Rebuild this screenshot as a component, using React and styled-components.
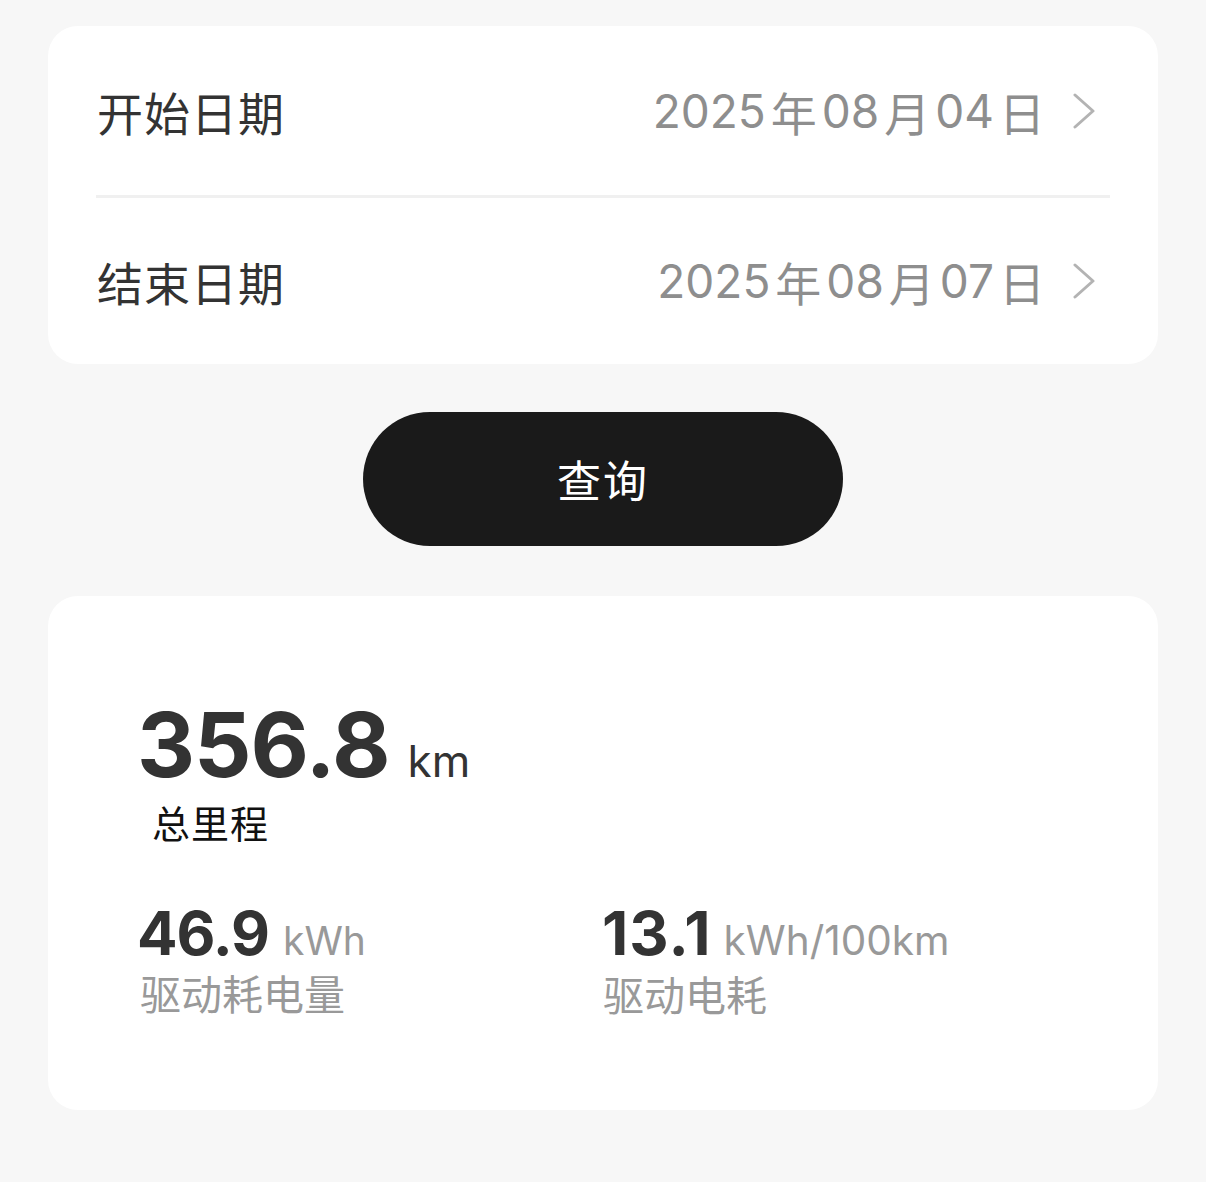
import React from 'react';
import styled, { createGlobalStyle } from 'styled-components';

const GlobalStyle = createGlobalStyle`
  html, body {
    margin: 0;
    padding: 0;
    background: #f7f7f7;
  }
  body {
    font-family: Inter, "Noto Sans CJK SC", sans-serif;
  }
`;

const Page = styled.div`
  padding: 26px 48px 70px;
  display: flex;
  flex-direction: column;
  align-items: stretch;
`;

const Card = styled.div`
  background: #fff;
  border-radius: 30px;
`;

const DateCard = styled(Card)`
  padding: 0 48px;
`;

const Row = styled.div`
  height: 169px;
  display: flex;
  align-items: center;
  justify-content: space-between;
  border-top: ${p => (p.first ? 'none' : '3px solid #f0f0f0')};
  box-sizing: border-box;
`;

const Label = styled.span`
  font-size: 46px;
  color: #333;
  letter-spacing: 1px;
  margin-left: 1px;
`;

const Value = styled.span`
  display: flex;
  align-items: center;
  font-size: 46px;
  color: #8e8e8e;
  margin-right: 15px;

  svg {
    margin-left: 23px;
  }
`;

const Cjk = styled.span`
  margin: 0 5px;
`;

const QueryButton = styled.button`
  align-self: center;
  width: 480px;
  height: 134px;
  margin: 48px 0 50px;
  border: none;
  border-radius: 67px;
  background: #1a1a1a;
  color: #fff;
  font-family: "Noto Sans CJK SC", sans-serif;
  font-size: 44px;
  letter-spacing: 2px;
`;

const StatsCard = styled(Card)`
  padding: 104px 92px 90px;
  height: 514px;
  box-sizing: border-box;
`;

const Figure = styled.div`
  display: flex;
  align-items: baseline;
  color: #333;
`;

const Number = styled.span`
  font-weight: 700;
  font-size: ${p => p.size}px;
  line-height: 1;
  letter-spacing: ${p => p.spacing ?? -1}px;
  margin-left: ${p => p.offset ?? -3}px;
`;

const Unit = styled.span`
  font-size: ${p => p.size}px;
  color: ${p => p.color || '#333'};
  margin-left: ${p => p.gap}px;
`;

const MainCaption = styled.div`
  font-size: 38px;
  color: #111;
  margin: 4px 0 0 12px;
  letter-spacing: 1px;
  font-family: "Noto Sans CJK SC", sans-serif;
`;

const Grid = styled.div`
  display: grid;
  grid-template-columns: 1fr 1fr;
  margin-top: 54px;
`;

const Caption = styled.div`
  font-size: 41px;
  line-height: 1.2;
  color: #999;
  margin-top: 4px;
  font-family: "Noto Sans CJK SC", sans-serif;
`;

const Chevron = () => (
  <svg width="22" height="36" viewBox="0 0 22 36" fill="none">
    <path d="M2 2 L20 18 L2 34" stroke="#b3b3b3" strokeWidth="3" strokeLinecap="round" strokeLinejoin="round" />
  </svg>
);

const DateValue = ({ y, m, d }) => (
  <Value>
    {y}<Cjk>年</Cjk>{m}<Cjk>月</Cjk>{d}<Cjk>日</Cjk>
    <Chevron />
  </Value>
);

const App = () => (
  <>
    <GlobalStyle />
    <Page>
      <DateCard>
        <Row first>
          <Label>开始日期</Label>
          <DateValue y="2025" m="08" d="04" />
        </Row>
        <Row>
          <Label>结束日期</Label>
          <DateValue y="2025" m="08" d="07" />
        </Row>
      </DateCard>

      <QueryButton>查询</QueryButton>

      <StatsCard>
        <Figure>
          <Number size={90}>356.8</Number>
          <Unit size={44} gap={18}>km</Unit>
        </Figure>
        <MainCaption>总里程</MainCaption>
        <Grid>
          <div>
            <Figure>
              <Number size={60}>46.9</Number>
              <Unit size={39} gap={14} color="#999">kWh</Unit>
            </Figure>
            <Caption>驱动耗电量</Caption>
          </div>
          <div>
            <Figure>
              <Number size={61} spacing={1} offset={-1}>13.1</Number>
              <Unit size={40.5} gap={12} color="#999">kWh/100km</Unit>
            </Figure>
            <Caption>驱动电耗</Caption>
          </div>
        </Grid>
      </StatsCard>
    </Page>
  </>
);

export default App;
